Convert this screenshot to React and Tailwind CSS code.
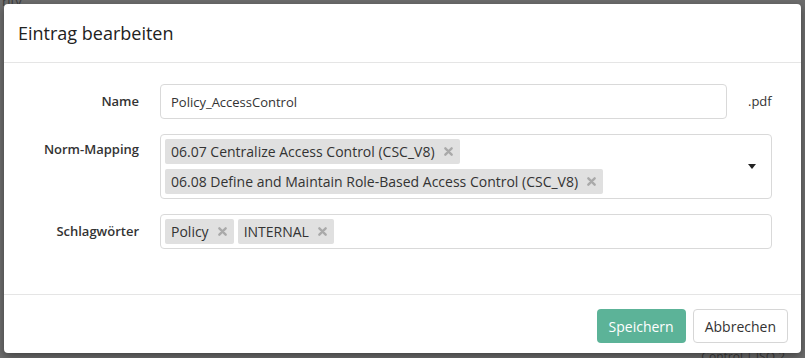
const NORMS = [
  '06.07 Centralize Access Control (CSC_V8)',
  '06.08 Define and Maintain Role-Based Access Control (CSC_V8)',
];

const KEYWORDS = ['Policy', 'INTERNAL'];

function Tag({ label }) {
  return (
    <span className="flex h-[25px] items-center gap-[9px] rounded-[2px] bg-[#e0e0e0] pl-[6px] pr-[7px] text-[14px] text-[#333]">
      {label}
      <svg width="9" height="9" viewBox="0 0 10 10" className="shrink-0">
        <path d="M1.5 1.5 L8.5 8.5 M8.5 1.5 L1.5 8.5" stroke="#a9a9a9" strokeWidth="2.6" strokeLinecap="round" />
      </svg>
    </span>
  );
}

function Row({ label, children, top = 'pt-[8px]' }) {
  return (
    <div className="flex items-start">
      <label className={`w-[135px] shrink-0 text-right text-[13px] font-semibold text-[#333] ${top}`}>
        {label}
      </label>
      <div className="ml-[21px] flex flex-1 items-start">{children}</div>
    </div>
  );
}

export default function App() {
  return (
    <div
      className="relative h-[358px] w-[805px] overflow-hidden bg-[#6d6d6d] p-[4px]"
      style={{ fontFamily: '"Open Sans", "Liberation Sans", sans-serif' }}
    >
      {/* faint page behind the overlay */}
      <span className="absolute left-[2px] top-[-8px] text-[13px] text-[#3c3c3c]">rity</span>
      <span className="absolute bottom-[-8px] right-[20px] text-[12px] text-[#3c3c3c]">Control | ISO 2</span>

      {/* ── Dialog ── */}
      <div className="relative flex h-[349px] w-[797px] flex-col rounded-[4px] bg-white shadow-[0_3px_9px_rgba(0,0,0,0.4)]">
        <div className="flex h-[59px] items-center border-b border-[#e5e5e5] px-[14px]">
          <h4 className="text-[18px] text-[#222]">Eintrag bearbeiten</h4>
        </div>

        <div className="flex flex-col gap-[15px] pr-[29px] pt-[21px]">
          <Row label="Name">
            <input
              readOnly
              value="Policy_AccessControl"
              className="h-[35px] w-[567px] rounded-[4px] border border-[#d9d9d9] px-[10px] text-[13px] text-[#333] outline-none"
            />
            <span className="ml-[21px] pt-[8px] text-[13px] text-[#333]">.pdf</span>
          </Row>

          <Row label="Norm-Mapping" top="pt-[6px]">
            <div className="flex h-[65px] flex-1 items-start rounded-[4px] border border-[#d9d9d9] py-[4px] pl-[4px] pr-[15px]">
              <div className="flex flex-1 flex-col items-start gap-[5px]">
                {NORMS.map(n => <Tag key={n} label={n} />)}
              </div>
              <div className="mt-[25px] h-0 w-0 border-x-[4px] border-t-[5px] border-x-transparent border-t-[#222]" />
            </div>
          </Row>

          <Row label="Schlagwörter">
            <div className="flex h-[35px] flex-1 items-center gap-[4px] rounded-[4px] border border-[#d9d9d9] px-[4px]">
              {KEYWORDS.map(k => <Tag key={k} label={k} />)}
            </div>
          </Row>
        </div>

        <div className="mt-auto flex h-[59px] items-start justify-end gap-[7px] border-t border-[#e5e5e5] pr-[13px] pt-[14px]">
          <button className="h-[34px] rounded-[4px] bg-[#5cb398] px-[12px] text-[14px] text-white">Speichern</button>
          <button className="h-[34px] rounded-[4px] border border-[#d6d6d6] bg-white px-[11px] text-[14px] text-[#333]">Abbrechen</button>
        </div>
      </div>
    </div>
  );
}
